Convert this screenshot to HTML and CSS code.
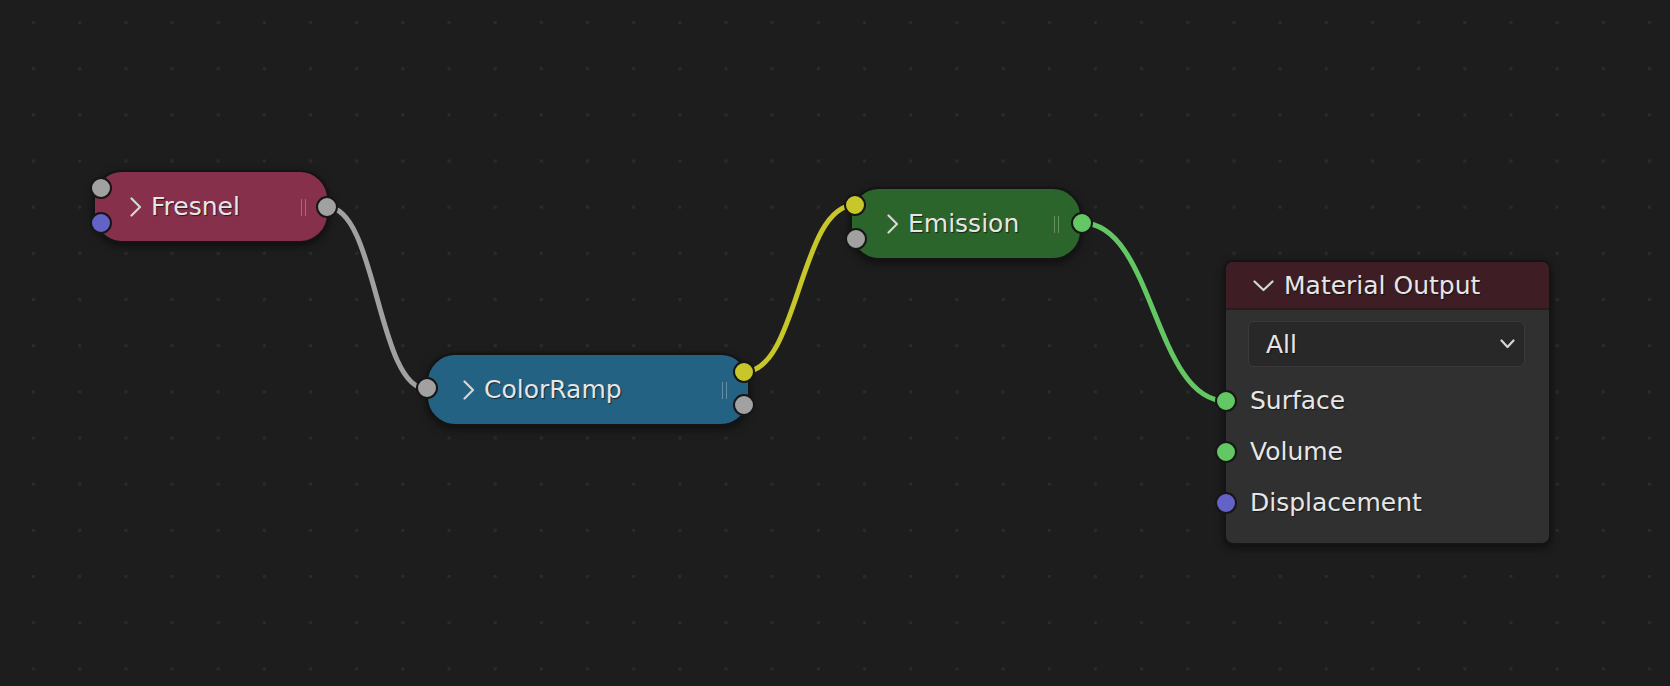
FILE: index.html
```html
<!DOCTYPE html>
<html>
<head>
<meta charset="utf-8">
<title>Shader Editor</title>
<link rel="stylesheet" href="styles.css">
</head>
<body>
<div class="editor">
	<!-- grid dots and links sit under the nodes -->
	<svg class="wires" width="1670" height="686">
		<defs>
			<pattern id="grid" x="32" y="21" width="46.17" height="46.17" patternUnits="userSpaceOnUse">
				<rect width="3" height="3" fill="#2b2b2b"/>
			</pattern>
		</defs>
		<rect width="1670" height="686" fill="url(#grid)"/>
		<path class="wire grey" d="M327 207 C377 207 377 389 427 389"/>
		<path class="wire yellow" d="M744 372 C799 372 799 205 855 205"/>
		<path class="wire green" d="M1082 223 C1154 223 1154 401 1226 401"/>
	</svg>

	<div class="node collapsed fresnel">
		<span class="socket grey s-in1"></span>
		<span class="socket purple s-in2"></span>
		<svg class="arrow" width="12" height="20" viewBox="0 0 12 20"><path d="M1.5 1.5 L10 10 L1.5 18.5"/></svg>
		<span class="label">Fresnel</span>
		<span class="grip"></span>
		<span class="socket grey s-out"></span>
	</div>

	<div class="node collapsed colorramp">
		<span class="socket grey s-in"></span>
		<svg class="arrow" width="12" height="20" viewBox="0 0 12 20"><path d="M1.5 1.5 L10 10 L1.5 18.5"/></svg>
		<span class="label">ColorRamp</span>
		<span class="grip"></span>
		<span class="socket yellow s-out1"></span>
		<span class="socket grey s-out2"></span>
	</div>

	<div class="node collapsed emission">
		<span class="socket yellow s-in1"></span>
		<span class="socket grey s-in2"></span>
		<svg class="arrow" width="12" height="20" viewBox="0 0 12 20"><path d="M1.5 1.5 L10 10 L1.5 18.5"/></svg>
		<span class="label">Emission</span>
		<span class="grip"></span>
		<span class="socket green s-out"></span>
	</div>

	<div class="node output">
		<div class="node-head">
			<svg class="arrow-down" width="21" height="12" viewBox="0 0 21 12"><path d="M1.5 1.5 L10.5 10 L19.5 1.5"/></svg>
			<span class="label">Material Output</span>
		</div>
		<div class="node-body">
			<div class="select">
				<span>All</span>
				<svg class="select-arrow" width="15" height="10" viewBox="0 0 15 10"><path d="M1.5 1.5 L7.5 8 L13.5 1.5"/></svg>
			</div>
			<div class="row"><span class="socket green"></span>Surface</div>
			<div class="row"><span class="socket green"></span>Volume</div>
			<div class="row"><span class="socket purple"></span>Displacement</div>
		</div>
	</div>
</div>
</body>
</html>
```

FILE: styles.css
```css
*{margin: 0;padding: 0;box-sizing: border-box;}
body{background: #1d1d1d;font-family: "DejaVu Sans", "Liberation Sans", sans-serif;}
.editor{width: 1670px;height: 686px;position: relative;overflow: hidden;background: #1d1d1d;color: #e6e6e6;font-size: 25px;}
.wires{position: absolute;left: 0;top: 0;}
.wire{fill: none;stroke-width: 5;stroke-linecap: round;}
.wire.grey{stroke: #a1a1a1;}
.wire.yellow{stroke: #c7c729;}
.wire.green{stroke: #63c763;}

/* nodes sit on the free canvas at their own coordinates */
.node{position: absolute;border: 2px solid #141414;box-shadow: 0 3px 9px rgba(0,0,0,0.5);}
.collapsed{height: 73px;border-radius: 29px;display: flex;align-items: center;padding-left: 35px;}
.fresnel{left: 93px;top: 170px;width: 236px;background: #87304c;}
.colorramp{left: 426px;top: 353px;width: 324px;background: #246283;}
.emission{left: 850px;top: 187px;width: 232px;background: #2b652b;}

.label{text-shadow: 1px 1px 1px rgba(0,0,0,0.6);white-space: nowrap;}
.arrow{margin-right: 9px;flex: none;}
.arrow path,.arrow-down path,.select-arrow path{fill: none;stroke: #d6d6d6;stroke-width: 2.2;stroke-linecap: round;stroke-linejoin: round;}
.grip{position: absolute;right: 21px;top: 50%;margin-top: -8px;width: 5px;height: 17px;border-left: 1px solid rgba(255,255,255,0.28);border-right: 1px solid rgba(255,255,255,0.28);}

/* sockets */
.socket{position: absolute;width: 22px;height: 22px;border-radius: 50%;border: 2px solid #161616;transform: translate(-50%,-50%);z-index: 2;}
.socket.grey{background: #a1a1a1;}
.socket.purple{background: #6363c7;}
.socket.yellow{background: #c7c729;}
.socket.green{background: #63c763;}
.fresnel .s-in1{left: 6px;top: 16px;}
.fresnel .s-in2{left: 6px;top: 51px;}
.fresnel .s-out{left: 232px;top: 35px;}
.colorramp .s-in{left: -1px;top: 33px;}
.colorramp .s-out1{left: 316px;top: 17px;}
.colorramp .s-out2{left: 316px;top: 50px;}
.emission .s-in1{left: 3px;top: 16px;}
.emission .s-in2{left: 4px;top: 50px;}
.emission .s-out{left: 230px;top: 34px;}

/* material output */
.output{left: 1224px;top: 260px;width: 327px;height: 285px;border-radius: 9px;background: #303030;}
.node-head{height: 48px;background: #3e1e24;border-bottom: 2px solid #2a1a1d;border-radius: 7px 7px 0 0;display: flex;align-items: center;padding-left: 27px;}
.arrow-down{margin-right: 10px;margin-top: 2px;}
.node-body{padding: 11px 0 15px;display: flex;flex-direction: column;}
.select{margin: 0 24px 8px 22px;height: 46px;border-radius: 6px;background: #282828;border: 1px solid #3a3a3a;display: flex;align-items: center;justify-content: space-between;padding: 0 9px 0 17px;}
.select span{text-shadow: 1px 1px 1px rgba(0,0,0,0.5);}
.row{position: relative;height: 51px;display: flex;align-items: center;padding-left: 24px;text-shadow: 1px 1px 1px rgba(0,0,0,0.5);}
.row .socket{left: 0;top: 50%;}
```
